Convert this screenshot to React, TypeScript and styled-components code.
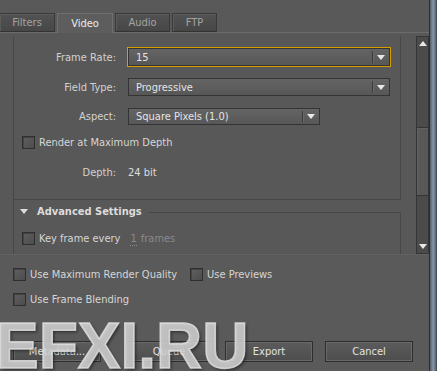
import React from 'react';
import styled, { createGlobalStyle } from 'styled-components';

const Global = createGlobalStyle`
  html, body { margin: 0; padding: 0; background: #595959; }
  body {
    font-family: "DejaVu Sans Condensed", "DejaVu Sans", "Liberation Sans", sans-serif;
    font-stretch: condensed;
    font-size: 11px;
    color: #d6d6d6;
  }
  * { box-sizing: border-box; }
`;

const Window = styled.div`
  position: relative;
  width: 437px;
  height: 371px;
  display: flex;
  overflow: hidden;
  background: #595959;
`;

const Main = styled.div`
  width: 429px;
  display: flex;
  flex-direction: column;
`;

const FrameEdge = styled.div`
  width: 8px;
  background: linear-gradient(90deg, #2a2e33 0, #2a2e33 1px, #4f5d6b 1px, #8797a8 4px, #6a7a8a 6px, #3a434d 8px);
`;

const TabBar = styled.div`
  height: 33px;
  padding-top: 13px;
  display: flex;
  align-items: flex-end;
  gap: 2px;
  border-bottom: 1px solid #6c6c6c;
`;

const Tab = styled.div<{ $w: number; $active?: boolean; $ml?: number }>`
  width: ${p => p.$w}px;
  margin-left: ${p => p.$ml ?? 0}px;
  height: ${p => (p.$active ? 20 : 19)}px;
  margin-bottom: ${p => (p.$active ? -1 : 0)}px;
  display: flex;
  align-items: center;
  justify-content: center;
  padding-bottom: ${p => (p.$active ? 1 : 0)}px;
  color: ${p => (p.$active ? '#ececec' : '#a4a4a4')};
  background: ${p => (p.$active ? '#5d5d5d' : 'linear-gradient(#525252, #474747)')};
  border: 1px solid ${p => (p.$active ? '#6e6e6e' : '#393939')};
  border-bottom: ${p => (p.$active ? 'none' : '1px solid #333')};
  box-shadow: ${p => (p.$active ? 'none' : 'inset 1px 1px 0 #5c5c5c')};
`;

const ScrollArea = styled.div`
  height: 221px;
  padding-top: 3px;
  display: flex;
  background: #585858;
`;

const Content = styled.div`
  flex: 1;
  overflow: hidden;
  padding: 0 15px 0 13px;
`;

const ContentFrame = styled.div`
  border-left: 1px solid #474747;
  height: 260px;
`;

const SettingsBox = styled.div`
  border-right: 1px solid #474747;
  border-bottom: 1px solid #474747;
  padding-bottom: 20px;
  display: flex;
  flex-direction: column;
`;

const FieldRow = styled.div<{ $top: number; $h: number }>`
  display: grid;
  grid-template-columns: 102px auto;
  column-gap: 12px;
  align-items: center;
  margin-top: ${p => p.$top}px;
  height: ${p => p.$h}px;
`;

const Label = styled.span`
  text-align: right;
  color: #d2d2d2;
  white-space: nowrap;
`;

const Value = styled.span`
  color: #dedede;
`;

const Select = styled.div<{ $w: number; $h: number; $focus?: boolean }>`
  width: ${p => p.$w}px;
  height: ${p => p.$h}px;
  display: flex;
  align-items: stretch;
  border: 1px solid #343434;
  background: linear-gradient(#646464, #575757);
  box-shadow: ${p => (p.$focus ? '0 0 0 1px #d69c00' : 'none')};
  color: #e4e4e4;
`;

const SelectText = styled.span`
  flex: 1;
  padding-left: 7px;
  display: flex;
  align-items: center;
  white-space: nowrap;
`;

const SelectArrow = styled.span`
  width: 17px;
  margin: 2px 0;
  border-left: 1px solid #3a3a3a;
  box-shadow: inset 1px 0 0 #6a6a6a;
  display: flex;
  align-items: center;
  justify-content: center;
`;

const DownTri = styled.span<{ $c?: string }>`
  width: 0;
  height: 0;
  border-left: 4px solid transparent;
  border-right: 4px solid transparent;
  border-top: 5px solid ${p => p.$c ?? '#e8e8e8'};
`;

const UpTri = styled.span`
  width: 0;
  height: 0;
  border-left: 4px solid transparent;
  border-right: 4px solid transparent;
  border-bottom: 5px solid #e8e8e8;
`;

const CheckRow = styled.div<{ $top: number; $left: number }>`
  display: flex;
  align-items: center;
  gap: 4px;
  margin-top: ${p => p.$top}px;
  padding-left: ${p => p.$left}px;
  height: 13px;
  white-space: nowrap;
  color: #d6d6d6;
`;

const Check = styled.span`
  width: 13px;
  height: 13px;
  flex: none;
  border: 1px solid #2f2f2f;
  background: linear-gradient(135deg, #606060, #4c4c4c);
  box-shadow: inset 1px 1px 0 #444;
`;

const AdvHeader = styled.div`
  height: 23px;
  display: flex;
  align-items: center;
  padding-left: 6px;
`;

const AdvTitle = styled.span`
  font-weight: bold;
  color: #dcdcdc;
  margin-left: 9px;
  margin-right: 7px;
  white-space: nowrap;
`;

const HeaderLine = styled.span`
  flex: 1;
  align-self: flex-end;
  height: 11px;
  border-top: 1px solid #474747;
  border-right: 1px solid #474747;
`;

const GroupBody = styled.div`
  border-right: 1px solid #474747;
  padding-top: 9px;
  height: 60px;
`;

const Muted = styled.span`
  color: #8a8a8a;
  margin-left: 6px;
`;

const Dotted = styled.span`
  border-bottom: 1px dotted #8a8a8a;
  margin-right: 4px;
`;

const Scrollbar = styled.div`
  width: 13px;
  display: flex;
  flex-direction: column;
  border: 1px solid #363636;
  background: #4b4b4b;
`;

const ScrollBtn = styled.div`
  height: 13px;
  display: flex;
  align-items: center;
  justify-content: center;
`;

const ScrollGap = styled.div<{ $h?: number }>`
  ${p => (p.$h ? `height: ${p.$h}px;` : 'flex: 1;')}
`;

const Thumb = styled.div`
  height: 69px;
  margin: 0 -1px;
  border: 1px solid #343434;
  background: #585858;
  box-shadow: inset 1px 1px 0 #626262;
`;

const Bottom = styled.div`
  flex: 1;
  border-top: 1px solid #626262;
  background: #5a5a5a;
  padding: 13px 0 0 13px;
  display: flex;
  flex-direction: column;
`;

const OptionGrid = styled.div`
  display: grid;
  grid-template-columns: 177px auto;
  row-gap: 12px;
`;

const OptRow = styled.div`
  display: flex;
  align-items: center;
  gap: 4px;
  height: 13px;
  white-space: nowrap;
`;

const ButtonRow = styled.div`
  display: flex;
  margin-top: 35px;
`;

const Button = styled.div<{ $mr: number }>`
  width: 88px;
  height: 21px;
  margin-right: ${p => p.$mr}px;
  display: flex;
  align-items: center;
  justify-content: center;
  border: 1px solid #2e2e2e;
  background: linear-gradient(#5c5c5c, #4d4d4d);
  box-shadow: inset 0 0 0 1px #686868;
  color: #e2e2e2;
`;

const Watermark = styled.div`
  position: absolute;
  left: -4px;
  top: 314px;
  font-family: "Liberation Sans", Arial, sans-serif;
  font-weight: bold;
  font-size: 64px;
  line-height: 64px;
  color: rgba(226, 226, 226, 0.8);
  -webkit-text-stroke: 1.5px rgba(226, 226, 226, 0.8);
  text-shadow: 2px 2px 3px rgba(0, 0, 0, 0.45);
  pointer-events: none;
  white-space: nowrap;
  font-stretch: normal;
`;

export default function App() {
  return (
    <Window>
      <Global />
      <Main>
        <TabBar>
          <Tab $w={56} $ml={-1}>Filters</Tab>
          <Tab $w={56} $active>Video</Tab>
          <Tab $w={55}>Audio</Tab>
          <Tab $w={45}>FTP</Tab>
        </TabBar>
        <ScrollArea>
          <Content>
            <ContentFrame>
              <SettingsBox>
                <FieldRow $top={12} $h={18}>
                  <Label>Frame Rate:</Label>
                  <Select $w={262} $h={18} $focus>
                    <SelectText>15</SelectText>
                    <SelectArrow><DownTri /></SelectArrow>
                  </Select>
                </FieldRow>
                <FieldRow $top={12} $h={18}>
                  <Label>Field Type:</Label>
                  <Select $w={262} $h={18}>
                    <SelectText>Progressive</SelectText>
                    <SelectArrow><DownTri /></SelectArrow>
                  </Select>
                </FieldRow>
                <FieldRow $top={12} $h={17}>
                  <Label>Aspect:</Label>
                  <Select $w={192} $h={17}>
                    <SelectText>Square Pixels (1.0)</SelectText>
                    <SelectArrow><DownTri /></SelectArrow>
                  </Select>
                </FieldRow>
                <CheckRow $top={11} $left={8}>
                  <Check />
                  <span>Render at Maximum Depth</span>
                </CheckRow>
                <FieldRow $top={16} $h={14}>
                  <Label>Depth:</Label>
                  <Value>24 bit</Value>
                </FieldRow>
              </SettingsBox>
              <AdvHeader>
                <DownTri $c="#dcdcdc" />
                <AdvTitle>Advanced Settings</AdvTitle>
                <HeaderLine />
              </AdvHeader>
              <GroupBody>
                <CheckRow $top={0} $left={8}>
                  <Check />
                  <span>Key frame every</span>
                  <Muted><Dotted>1</Dotted>frames</Muted>
                </CheckRow>
              </GroupBody>
            </ContentFrame>
          </Content>
          <Scrollbar>
            <ScrollBtn><UpTri /></ScrollBtn>
            <ScrollGap $h={77} />
            <Thumb />
            <ScrollGap />
            <ScrollBtn><DownTri /></ScrollBtn>
          </Scrollbar>
        </ScrollArea>
        <Bottom>
          <OptionGrid>
            <OptRow><Check /><span>Use Maximum Render Quality</span></OptRow>
            <OptRow><Check /><span>Use Previews</span></OptRow>
            <OptRow><Check /><span>Use Frame Blending</span></OptRow>
          </OptionGrid>
          <ButtonRow>
            <Button $mr={24}>Metadata...</Button>
            <Button $mr={12}>Queue</Button>
            <Button $mr={12}>Export</Button>
            <Button $mr={0}>Cancel</Button>
          </ButtonRow>
        </Bottom>
      </Main>
      <FrameEdge />
      <Watermark>EFXI.RU</Watermark>
    </Window>
  );
}
